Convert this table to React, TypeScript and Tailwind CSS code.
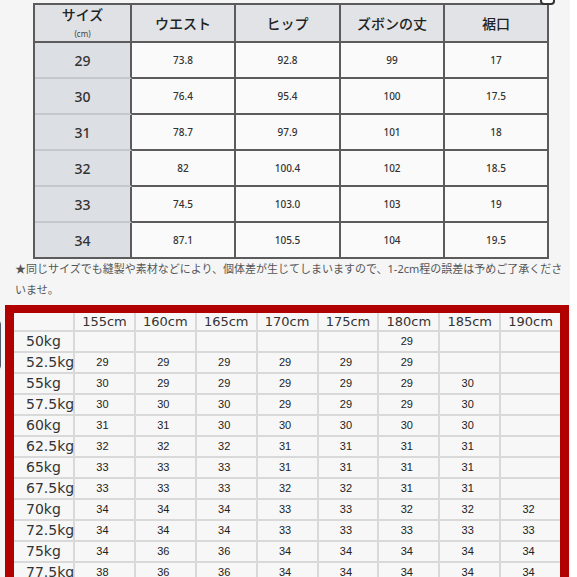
import React from "react";

const topHeaders = ["ウエスト", "ヒップ", "ズボンの丈", "裾口"];
const topRows: [string, string, string, string, string][] = [
  ["29", "73.8", "92.8", "99", "17"],
  ["30", "76.4", "95.4", "100", "17.5"],
  ["31", "78.7", "97.9", "101", "18"],
  ["32", "82", "100.4", "102", "18.5"],
  ["33", "74.5", "103.0", "103", "19"],
  ["34", "87.1", "105.5", "104", "19.5"],
];

const heights = ["155cm", "160cm", "165cm", "170cm", "175cm", "180cm", "185cm", "190cm"];
const weightRows: [string, string[]][] = [
  ["50kg", ["", "", "", "", "", "29", "", ""]],
  ["52.5kg", ["29", "29", "29", "29", "29", "29", "", ""]],
  ["55kg", ["30", "29", "29", "29", "29", "29", "30", ""]],
  ["57.5kg", ["30", "30", "30", "29", "29", "29", "30", ""]],
  ["60kg", ["31", "31", "30", "30", "30", "30", "30", ""]],
  ["62.5kg", ["32", "32", "32", "31", "31", "31", "31", ""]],
  ["65kg", ["33", "33", "33", "31", "31", "31", "31", ""]],
  ["67.5kg", ["33", "33", "33", "32", "32", "31", "31", ""]],
  ["70kg", ["34", "34", "34", "33", "33", "32", "32", "32"]],
  ["72.5kg", ["34", "34", "34", "33", "33", "33", "33", "33"]],
  ["75kg", ["34", "36", "36", "34", "34", "34", "34", "34"]],
  ["77.5kg", ["38", "36", "36", "34", "34", "34", "34", "34"]],
];

const jp = { fontFamily: '"Noto Sans", "Noto Sans CJK JP", sans-serif' };
const dv = { fontFamily: '"DejaVu Sans", sans-serif' };
const ar = { fontFamily: '"Liberation Sans", Arial, sans-serif' };

export default function App() {
  return (
    <div className="relative flex w-[577px] h-[577px] overflow-hidden bg-white">
      <div className="w-[570px] bg-[#f5f5f5] pt-[3px]">
        {/* Top size table */}
        <div className="ml-[33px] w-[516px] border-t-2 border-l-2 border-[#5b5b5b]" style={jp}>
          <div className="grid grid-cols-[97px_104px_105px_104px_104px]">
            <div className="h-[38px] flex flex-col items-center justify-center bg-[#dfe1e4] border-r-2 border-b-2 border-[#5b5b5b]">
              <span className="text-[14px] leading-[16px] font-medium text-[#222]">サイズ</span>
              <span className="text-[8px] leading-[11px] mt-[5px] text-[#444]">(cm)</span>
            </div>
            {topHeaders.map((h) => (
              <div
                key={h}
                className="h-[38px] flex items-center justify-center bg-[#e1e3e6] border-r-2 border-b-2 border-[#5b5b5b] text-[14px] font-medium text-[#222]"
              >
                {h}
              </div>
            ))}
            {topRows.map((r, i) => (
              <React.Fragment key={r[0]}>
                <div
                  className={`h-[36px] flex items-center justify-center bg-[#dcdfe3] border-r-2 border-b-2 text-[14px] font-medium text-[#333] ${
                    i === topRows.length - 1 ? "border-b-[#5b5b5b]" : "border-b-[#c4c8cd]"
                  } border-r-[#5b5b5b]`}
                >
                  {r[0]}
                </div>
                {r.slice(1).map((v, j) => (
                  <div
                    key={j}
                    className="h-[36px] flex items-center justify-center bg-[#fafafa] border-r-2 border-b-2 border-[#5b5b5b] text-[10px] font-medium text-[#333]"
                  >
                    {v}
                  </div>
                ))}
              </React.Fragment>
            ))}
          </div>
        </div>

        {/* Note */}
        <p className="ml-[15px] mt-[-1px] text-[11px] leading-[21px] text-[#555] whitespace-nowrap" style={jp}>
          ★同じサイズでも縫製や素材などにより、個体差が生じてしまいますので、1-2cm程の誤差は予めご了承くださ
          <br />
          いませ。
        </p>

        {/* Red bordered height/weight chart */}
        <div className="ml-[5px] mt-[5px] w-[564px] border-[9px] border-t-[8px] border-[#b00000] bg-[#d9d9d9]">
          <div className="grid grid-cols-[59px_repeat(8,minmax(0,1fr))] gap-[2px]">
            <div className="h-[17px] bg-[#f7f7f7]" />
            {heights.map((h) => (
              <div
                key={h}
                className="h-[17px] flex items-center justify-center bg-[#f7f7f7] text-[13px] text-[#333]"
                style={dv}
              >
                {h}
              </div>
            ))}
            {weightRows.map(([w, vals]) => (
              <React.Fragment key={w}>
                <div className="h-[19px] flex items-center pl-[12px] bg-[#f7f7f7] text-[14px] text-[#333]" style={dv}>
                  {w}
                </div>
                {vals.map((v, j) => (
                  <div
                    key={j}
                    className="h-[19px] flex items-center justify-center bg-[#f7f7f7] text-[11px] text-[#222] pr-[4px]"
                    style={ar}
                  >
                    {v}
                  </div>
                ))}
              </React.Fragment>
            ))}
          </div>
        </div>
      </div>

      {/* top-right partial icon */}
      <div className="absolute left-[540px] top-[-10px] w-[15px] h-[15px] rounded-[4px] border-2 border-[#333] bg-white" />
      {/* left-edge partial element */}
      <div className="absolute left-[-10px] top-[320px] w-[11px] h-[50px] rounded-[4px] border border-[#4f5b68]" />
    </div>
  );
}
